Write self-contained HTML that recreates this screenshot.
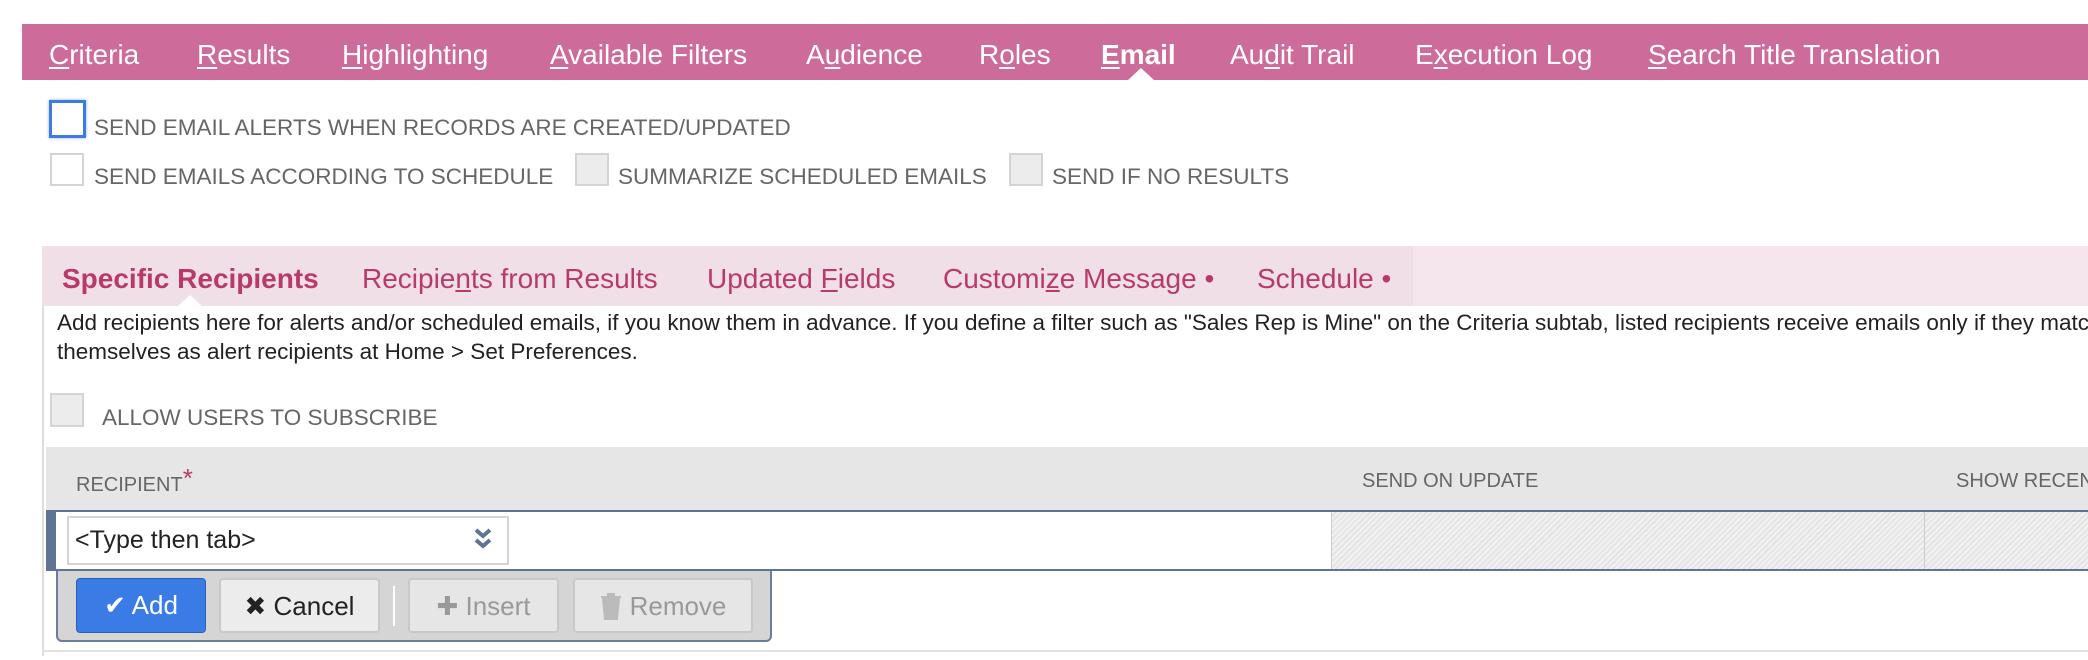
<!DOCTYPE html>
<html><head><meta charset="utf-8"><style>
*{box-sizing:border-box;margin:0;padding:0}
body{width:2088px;height:660px;background:#fff;font-family:"Liberation Sans",sans-serif;position:relative;overflow:hidden}
.a{position:absolute;white-space:nowrap}
.tb{top:24px;left:22px;right:0;height:56px;background:#cd6b9a}
.t{top:39px;font-size:28px;color:#fff}
.t u{text-decoration:underline;text-underline-offset:3px}
.cb{border:2px solid #d4d4d4;background:#fff;width:34px;height:33px}
.cbg{background:#ececec}
.lbl{font-size:22.5px;color:#666}
.st{top:263px;font-size:28px;color:#b83a6c}
.btn{top:578px;height:55px;border-radius:4px;font-size:26px;line-height:53px;text-align:center}
.hatch{background:repeating-linear-gradient(135deg,#f2f2f2 0 2px,#e4e4e4 2px 4px)}
</style></head><body>
<div class="a tb"></div>
<div class="a t" style="left:49px"><u>C</u>riteria</div>
<div class="a t" style="left:197px"><u>R</u>esults</div>
<div class="a t" style="left:342px"><u>H</u>ighlighting</div>
<div class="a t" style="left:550px"><u>A</u>vailable Filters</div>
<div class="a t" style="left:806px">A<u>u</u>dience</div>
<div class="a t" style="left:979px">R<u>o</u>les</div>
<div class="a t" style="left:1101px;font-weight:bold"><u>E</u>mail</div>
<div class="a t" style="left:1230px">Au<u>d</u>it Trail</div>
<div class="a t" style="left:1415px">E<u>x</u>ecution Log</div>
<div class="a t" style="left:1648px"><u>S</u>earch Title Translation</div>
<div class="a" style="left:1128px;top:68px;width:0;height:0;border-left:13px solid transparent;border-right:13px solid transparent;border-bottom:12px solid #fff"></div>

<div class="a cb" style="left:49px;top:100px;width:37px;height:38px;border:3px solid #3d7be0;box-shadow:0 0 3px #8ab0ee"></div>
<div class="a lbl" style="left:94px;top:115px">SEND EMAIL ALERTS WHEN RECORDS ARE CREATED/UPDATED</div>
<div class="a cb" style="left:50px;top:153px"></div>
<div class="a lbl" style="left:94px;top:164px">SEND EMAILS ACCORDING TO SCHEDULE</div>
<div class="a cb cbg" style="left:575px;top:153px"></div>
<div class="a lbl" style="left:618px;top:164px">SUMMARIZE SCHEDULED EMAILS</div>
<div class="a cb cbg" style="left:1009px;top:153px"></div>
<div class="a lbl" style="left:1052px;top:164px">SEND IF NO RESULTS</div>

<div class="a" style="left:42px;top:246px;right:0;height:60px;background:#f4e6ec"></div>
<div class="a" style="left:42px;top:246px;width:1371px;height:60px;background:#f0dfe7"></div>
<div class="a st" style="left:62px;font-weight:bold">Specific Recipients</div>
<div class="a st" style="left:362px">Recipie<u>n</u>ts from Results</div>
<div class="a st" style="left:707px">Updated <u>F</u>ields</div>
<div class="a st" style="left:943px">Customi<u>z</u>e Message •</div>
<div class="a st" style="left:1257px">Schedule •</div>
<div class="a" style="left:178px;top:295px;width:0;height:0;border-left:12px solid transparent;border-right:12px solid transparent;border-bottom:11px solid #fff"></div>
<div class="a" style="left:42px;top:306px;width:2px;height:350px;background:#ddd"></div>
<div class="a" style="left:42px;top:650px;right:0;height:2px;background:#e2e2e2"></div>
<div class="a" style="left:57px;top:308px;font-size:22.5px;color:#222;line-height:29px">Add recipients here for alerts and/or scheduled emails, if you know them in advance. If you define a filter such as "Sales Rep is Mine" on the Criteria subtab, listed recipients receive emails only if they match<br>themselves as alert recipients at Home &gt; Set Preferences.</div>

<div class="a cb cbg" style="left:50px;top:393px;height:34px"></div>
<div class="a lbl" style="left:102px;top:405px">ALLOW USERS TO SUBSCRIBE</div>

<div class="a" style="left:46px;top:447px;right:0;height:63px;background:#e6e6e6"></div>
<div class="a" style="left:76px;top:467px;font-size:20px;color:#666">RECIPIENT<span style="color:#b83a6c;font-size:26px;position:relative;top:-4px">*</span></div>
<div class="a" style="left:1362px;top:470px;font-size:20px;color:#666">SEND ON UPDATE</div>
<div class="a" style="left:1956px;top:470px;font-size:20px;color:#666">SHOW RECENT</div>

<div class="a" style="left:46px;top:510px;right:0;height:61px;border-top:2px solid #5f7394;border-bottom:2px solid #5f7394;background:#fff"></div>
<div class="a" style="left:46px;top:510px;width:10px;height:61px;background:#5f7394"></div>
<div class="a hatch" style="left:1331px;top:512px;width:593px;height:57px;border-left:1px solid #ccc"></div>
<div class="a hatch" style="left:1924px;top:512px;right:0;height:57px;border-left:1px solid #ccc"></div>
<div class="a" style="left:67px;top:516px;width:442px;height:49px;border:2px solid #d4d4d4;background:#fff"></div>
<div class="a" style="left:75px;top:526px;font-size:25px;color:#222">&lt;Type then tab&gt;</div>
<svg class="a" style="left:473px;top:527px" width="20" height="26" viewBox="0 0 20 26"><path d="M3 3l7 6 7-6M3 13l7 6 7-6" stroke="#5f7394" stroke-width="4" fill="none"/></svg>

<div class="a" style="left:56px;top:571px;width:716px;height:71px;background:#d5d5d5;border:2px solid #6a7d9c;border-top:none;border-radius:0 0 6px 6px"></div>
<div class="a btn" style="left:76px;width:130px;background:#3b7be6;border:1px solid #2a5fb8;color:#fff">✔ Add</div>
<div class="a btn" style="left:219px;width:161px;background:#ececec;border:2px solid #c8c8c8;color:#222">✖ Cancel</div>
<div class="a" style="left:393px;top:586px;width:2px;height:40px;background:#fff"></div>
<div class="a btn" style="left:408px;width:151px;background:#e6e6e6;border:2px solid #c8c8c8;color:#999">✚ Insert</div>
<div class="a btn" style="left:573px;width:180px;background:#e6e6e6;border:2px solid #c8c8c8;color:#999"><svg width="22" height="28" viewBox="0 0 22 28" style="vertical-align:-5px;margin-right:8px"><path d="M1 5h20M8 5V2h6v3M3 7h16l-2 20H5z" fill="#bbb" stroke="#bbb" stroke-width="2"/></svg>Remove</div>
</body></html>
